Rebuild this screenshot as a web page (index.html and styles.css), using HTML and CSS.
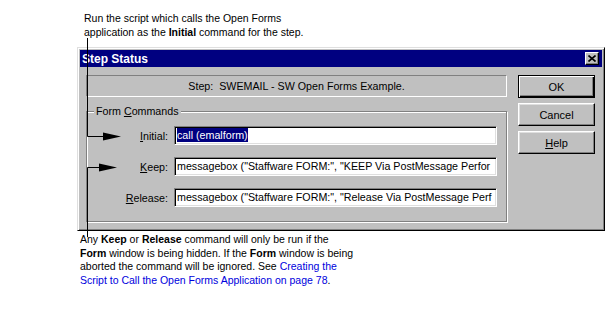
FILE: index.html
```html
<!DOCTYPE html>
<html lang="en">
<head>
  <meta charset="UTF-8">
  <title>Step Status</title>
  <link rel="stylesheet" href="styles.css">
</head>
<body>
  <div class="page">
    <p class="note note-top">Run the script which calls the Open Forms<br>application as the <b>Initial</b> command for the step.</p>

    <div class="dialog">
      <div class="titlebar">
        <span class="title">Step Status</span>
        <span class="close">
          <svg width="8" height="7" viewBox="0 0 8 7"><path d="M0.5 0.5 L7.5 6.5 M7.5 0.5 L0.5 6.5" stroke="#000" stroke-width="1.6"/></svg>
        </span>
      </div>
      <div class="dialog-body">
        <div class="main">
          <div class="step-box">Step:&nbsp; SWEMAIL - SW Open Forms Example.</div>
          <div class="group">
            <div class="group-title">Form <u>C</u>ommands</div>
            <div class="fields">
              <span class="label"><u>I</u>nitial:</span>
              <div class="field"><span class="sel">call (emalform)</span></div>
              <span class="label"><u>K</u>eep:</span>
              <div class="field">messagebox ("Staffware FORM:", "KEEP Via PostMessage Perfor</div>
              <span class="label"><u>R</u>elease:</span>
              <div class="field">messagebox ("Staffware FORM:", "Release Via PostMessage Perf</div>
            </div>
          </div>
        </div>
        <div class="buttons">
          <button class="btn default">OK</button>
          <button class="btn">Cancel</button>
          <button class="btn"><u>H</u>elp</button>
        </div>
      </div>
    </div>

    <p class="note note-bottom">Any <b>Keep</b> or <b>Release</b> command will only be run if the<br><b>Form</b> window is being hidden. If the <b>Form</b> window is being<br>aborted the command will be ignored. See <a href="#">Creating the<br>Script to Call the Open Forms Application on page 78</a>.</p>

    <!-- callout lines drawn over the screenshot -->
    <svg class="callouts" width="610" height="315" viewBox="0 0 610 315">
      <path d="M87.5 38 V136.5 H104" fill="none" stroke="#000" stroke-width="1"/>
      <polygon points="103,132.5 121,136.5 103,140.5" fill="#000"/>
      <path d="M87.5 237 V167.5 H100" fill="none" stroke="#000" stroke-width="1"/>
      <polygon points="99,163.5 117,167.5 99,171.5" fill="#000"/>
    </svg>
  </div>
</body>
</html>
```

FILE: styles.css
```css
body {
  margin: 0;
  background: #fff;
  font-family: 'Liberation Sans', Arial, sans-serif;
  color: #000;
}
.page {
  position: relative;
  width: 610px;
  height: 315px;
  overflow: hidden;
}
.note {
  margin: 0;
  font-size: 10.5px;
  line-height: 13.5px;
}
.note-top {
  padding: 12px 0 0 84px;
}
.note-bottom {
  padding-left: 80px;
  margin-top: 2px;
}
.note a {
  color: #0000dd;
  text-decoration: none;
}
.dialog {
  margin: 8px 0 0 77px;
  width: 528px;
  height: 184px;
  box-sizing: border-box;
  background: #c0c0c0;
  border: 1px solid;
  border-color: #dfdfdf #000 #000 #dfdfdf;
  box-shadow: inset 1px 1px 0 #fff, inset -1px -1px 0 #808080;
  padding: 2px;
  font-size: 10.7px;
}
.titlebar {
  height: 17px;
  background: #000080;
  color: #fff;
  display: flex;
  align-items: center;
  padding-left: 2px;
}
.title {
  font-weight: bold;
  font-size: 12px;
}
.close {
  margin-left: auto;
  margin-right: 3px;
  width: 14px;
  height: 13px;
  box-sizing: border-box;
  background: #c0c0c0;
  border: 1px solid;
  border-color: #fff #000 #000 #fff;
  box-shadow: inset -1px -1px 0 #808080;
  display: flex;
  align-items: center;
  justify-content: center;
}
.dialog-body {
  display: flex;
  padding: 8px 7px 0 6px;
  gap: 11px;
}
.main {
  width: 421px;
}
.step-box {
  height: 22px;
  box-sizing: border-box;
  border: 1px solid;
  border-color: #808080 #fff #fff #808080;
  display: flex;
  align-items: center;
  justify-content: center;
}
.group {
  margin-top: 14px;
  height: 111px;
  box-sizing: border-box;
  border: 1px solid #808080;
  box-shadow: inset 1px 1px 0 #fff, 1px 1px 0 #fff;
  padding: 0 9px 0 6px;
}
.group-title {
  display: table;
  margin: -7px 0 0 1px;
  padding: 0 2px;
  line-height: 13px;
  background: #c0c0c0;
}
.fields {
  display: grid;
  grid-template-columns: 75px 1fr;
  column-gap: 6px;
  row-gap: 12px;
  margin-top: 8px;
}
.label {
  text-align: right;
  align-self: center;
}
.field {
  height: 19px;
  box-sizing: border-box;
  background: #fff;
  border: 1px solid;
  border-color: #808080 #fff #fff #808080;
  box-shadow: inset 1px 1px 0 #000, inset -1px -1px 0 #dfdfdf;
  padding: 0 2px;
  line-height: 17px;
  white-space: nowrap;
  overflow: hidden;
}
.sel {
  background: #000080;
  color: #fff;
  padding: 1px 0;
}
.buttons {
  display: flex;
  flex-direction: column;
  gap: 5px;
}
.btn {
  width: 77px;
  height: 23px;
  font: 11px 'Liberation Sans', Arial, sans-serif;
  background: #c0c0c0;
  color: #000;
  border: 1px solid;
  border-color: #fff #000 #000 #fff;
  box-shadow: inset -1px -1px 0 #808080, inset 1px 1px 0 #dfdfdf;
  padding: 0;
}
.btn.default {
  border-color: #000;
  box-shadow: inset 1px 1px 0 #fff, inset -1px -1px 0 #000, inset -2px -2px 0 #808080;
}
.callouts {
  position: absolute;
  left: 0;
  top: 0;
  pointer-events: none;
}
```
